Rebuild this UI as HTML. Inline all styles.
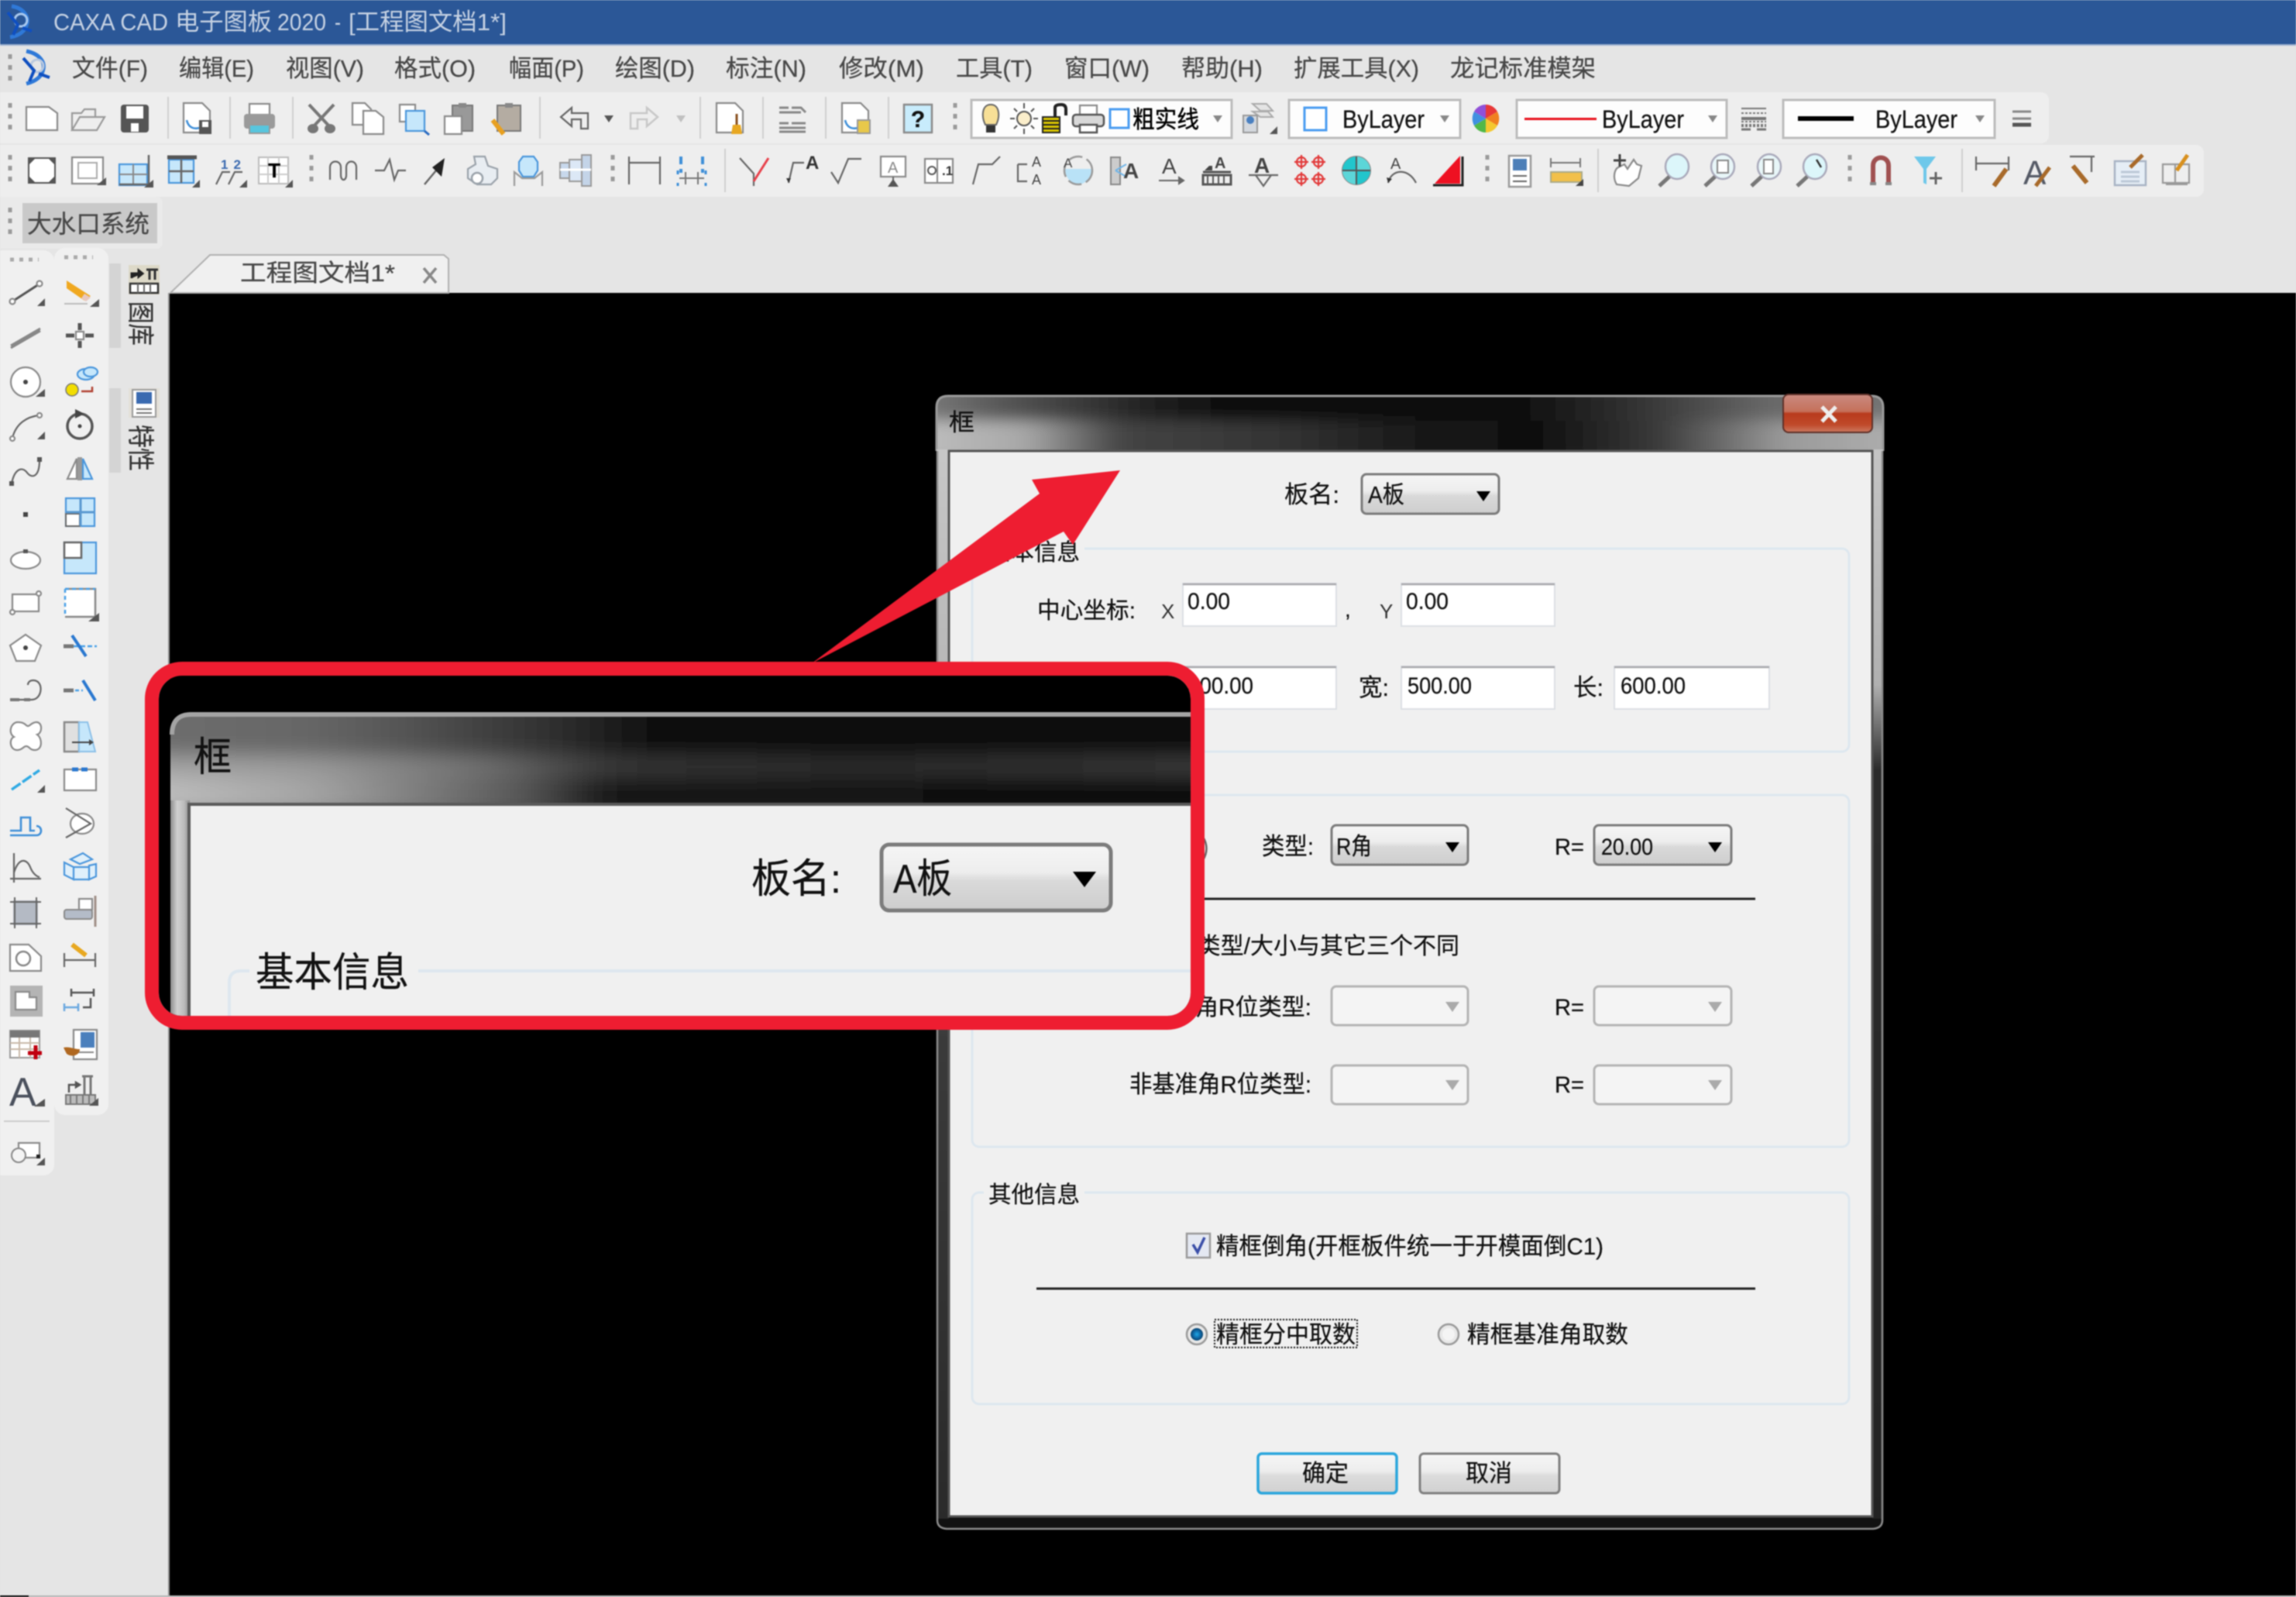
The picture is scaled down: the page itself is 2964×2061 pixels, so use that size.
<!DOCTYPE html>
<html lang="zh"><head><meta charset="utf-8"><title>CAXA CAD</title>
<style>
html,body{margin:0;padding:0;background:#e5e5e5;width:2964px;height:2061px;overflow:hidden}
svg{display:block;filter:blur(.9px)}
text{font-family:"Liberation Sans","Noto Sans CJK SC",sans-serif;fill:#111;stroke:#111;stroke-width:.25}
.m text,text.m{fill:#474747;stroke:#474747}
.s{fill:none;stroke:#666;stroke-width:2.2}
.l{fill:none;stroke:#999;stroke-width:2.2}
.w{fill:#fff;stroke:#8a8a8a;stroke-width:2.2}
.p{fill:#e8edf2;stroke:#9aa2aa;stroke-width:2.2}
.b{fill:#c6e7fb;stroke:#4a96dc;stroke-width:2.2}
.bl{fill:none;stroke:#3f8fd8;stroke-width:2.6}
.r{fill:none;stroke:#e23a3a;stroke-width:2.2}
.k{fill:#555}
.t{fill:#555}
.sep{stroke:#cfcfcf;stroke-width:2}
.grip{stroke:#9a9a9a;stroke-width:5;stroke-dasharray:6 8;fill:none}
</style></head><body>
<svg xmlns="http://www.w3.org/2000/svg" width="2964" height="2061" viewBox="0 0 2964 2061">
<defs>
<linearGradient id="cb" x1="0" y1="0" x2="0" y2="1"><stop offset="0" stop-color="#f5f5f5"/><stop offset=".42" stop-color="#ededed"/><stop offset=".55" stop-color="#d9d9d9"/><stop offset="1" stop-color="#cdcdcd"/></linearGradient>
<linearGradient id="btn" x1="0" y1="0" x2="0" y2="1"><stop offset="0" stop-color="#f6f6f6"/><stop offset=".45" stop-color="#ececec"/><stop offset=".55" stop-color="#dcdcdc"/><stop offset="1" stop-color="#d0d0d0"/></linearGradient>
<linearGradient id="close" x1="0" y1="0" x2="0" y2="1"><stop offset="0" stop-color="#c98a80"/><stop offset=".45" stop-color="#c5705a"/><stop offset=".5" stop-color="#b83a1c"/><stop offset=".8" stop-color="#c04a2a"/><stop offset="1" stop-color="#cc7a62"/></linearGradient>
<linearGradient id="side" x1="0" y1="0" x2="1" y2="0"><stop offset="0" stop-color="#8c8c8c"/><stop offset=".35" stop-color="#d0d0d0"/><stop offset=".7" stop-color="#bcbcbc"/><stop offset="1" stop-color="#8a8a8a"/></linearGradient>
<linearGradient id="t1" x1="0" y1="0" x2="1" y2="0"><stop offset="0" stop-color="#8a8a8a"/><stop offset=".1" stop-color="#5a5a5a"/><stop offset=".25" stop-color="#202020"/><stop offset=".33" stop-color="#0c0c0c"/><stop offset=".6" stop-color="#0c0c0c"/><stop offset=".72" stop-color="#333"/><stop offset=".85" stop-color="#6a6a6a"/><stop offset="1" stop-color="#777"/></linearGradient>
<linearGradient id="t2" x1="0" y1="0" x2="1" y2="0"><stop offset="0" stop-color="#c4c4c4"/><stop offset=".13" stop-color="#a8a8a8"/><stop offset=".22" stop-color="#444"/><stop offset=".38" stop-color="#333"/><stop offset=".5" stop-color="#1a1a1a"/><stop offset=".62" stop-color="#0e0e0e"/><stop offset=".74" stop-color="#3a3a3a"/><stop offset=".86" stop-color="#9a9a9a"/><stop offset="1" stop-color="#b4b4b4"/></linearGradient>
<linearGradient id="c1" x1="0" y1="0" x2="1" y2="0"><stop offset="0" stop-color="#707070"/><stop offset=".18" stop-color="#666"/><stop offset=".26" stop-color="#555"/><stop offset=".41" stop-color="#2a2a2a"/><stop offset=".48" stop-color="#0e0e0e"/><stop offset="1" stop-color="#0e0e0e"/></linearGradient>
<linearGradient id="c2" x1="0" y1="0" x2="1" y2="0"><stop offset="0" stop-color="#a4a4a4"/><stop offset=".18" stop-color="#989898"/><stop offset=".33" stop-color="#707070"/><stop offset=".44" stop-color="#383838"/><stop offset=".66" stop-color="#2a2a2a"/><stop offset="1" stop-color="#3a3a3a"/></linearGradient>
<linearGradient id="c3" x1="0" y1="0" x2="1" y2="0"><stop offset="0" stop-color="#c4c4c4"/><stop offset=".18" stop-color="#a4a4a4"/><stop offset=".37" stop-color="#555"/><stop offset=".44" stop-color="#151515"/><stop offset="1" stop-color="#0e0e0e"/></linearGradient>
<linearGradient id="fl" x1="0" y1="0" x2="0" y2="1"><stop offset="0" stop-color="#c6c6c6"/><stop offset=".2" stop-color="#b8b8b8"/><stop offset=".55" stop-color="#3a3a3a"/><stop offset="1" stop-color="#2a2a2a"/></linearGradient>
<linearGradient id="fr" x1="0" y1="0" x2="0" y2="1"><stop offset="0" stop-color="#c4c4c4"/><stop offset=".22" stop-color="#b0b0b0"/><stop offset=".3" stop-color="#2a2a2a"/><stop offset="1" stop-color="#222"/></linearGradient>
<filter id="bz" x="-5%" y="-50%" width="110%" height="200%"><feGaussianBlur stdDeviation="18 9"/></filter>
<filter id="bz2" x="-5%" y="-50%" width="110%" height="200%"><feGaussianBlur stdDeviation="28 12"/></filter>
<clipPath id="dt"><path d="M1209,582V526Q1209,511 1224,511H2416Q2431,511 2431,526V582Z"/></clipPath>
<clipPath id="ct"><path d="M220,1040V948Q220,922 246,922H1540V1040Z"/></clipPath>
<clipPath id="ci"><rect x="205" y="872" width="1332" height="439" rx="30"/></clipPath>
<radialGradient id="rd" cx=".5" cy=".5" r=".5"><stop offset="0" stop-color="#1fa8e6"/><stop offset=".55" stop-color="#0f6cab"/><stop offset="1" stop-color="#0a4470"/></radialGradient>
</defs>

<rect width="2964" height="2061" fill="#e5e5e5"/>
<!-- title -->
<rect width="2964" height="57" fill="#2b5797"/>
<rect y="57" width="2964" height="2" fill="#9fb2cf"/>
<g transform="translate(25,28)"><path d="M-10,-20C4,-18 12,-8 10,2C8,12 0,18 -12,20" fill="none" stroke="#2f79d8" stroke-width="5"/><circle cx="2" cy="-2" r="8" fill="none" stroke="#a9c8ee" stroke-width="3"/><path d="M-15,-12L-2,4L-8,17M16,12L4,8" fill="none" stroke="#0f4fc0" stroke-width="4"/></g>
<g font-size="31" style="fill:#c6d2e3">
<text x="69" y="39" textLength="148" lengthAdjust="spacingAndGlyphs" style="fill:#c6d2e3;stroke:none">CAXA CAD</text>
<text x="226" y="39" textLength="125" lengthAdjust="spacingAndGlyphs" style="fill:#c6d2e3;stroke:none">电子图板</text>
<text x="358" y="39" textLength="63" lengthAdjust="spacingAndGlyphs" style="fill:#c6d2e3;stroke:none">2020</text>
<text x="432" y="39" textLength="8" lengthAdjust="spacingAndGlyphs" style="fill:#c6d2e3;stroke:none">-</text>
<text x="450" y="39" textLength="204" lengthAdjust="spacingAndGlyphs" style="fill:#c6d2e3;stroke:none">[工程图文档1*]</text>
</g>

<!-- menu -->
<path class="grip" d="M13,70V106"/>
<g transform="translate(46,87)"><path d="M-12,-21C4,-18 12,-8 10,2C8,12 0,18 -12,21" fill="none" stroke="#2f79d8" stroke-width="5"/><circle cx="2" cy="-2" r="8" fill="none" stroke="#b9c8de" stroke-width="3"/><path d="M-16,-12L-2,4L-8,18M18,13L4,8" fill="none" stroke="#0f4fc0" stroke-width="4"/></g>
<g class="m" font-size="31">
<text x="93" y="99" textLength="98" lengthAdjust="spacingAndGlyphs">文件(F)</text>
<text x="231" y="99" textLength="97" lengthAdjust="spacingAndGlyphs">编辑(E)</text>
<text x="369" y="99" textLength="101" lengthAdjust="spacingAndGlyphs">视图(V)</text>
<text x="509" y="99" textLength="105" lengthAdjust="spacingAndGlyphs">格式(O)</text>
<text x="657" y="99" textLength="97" lengthAdjust="spacingAndGlyphs">幅面(P)</text>
<text x="794" y="99" textLength="103" lengthAdjust="spacingAndGlyphs">绘图(D)</text>
<text x="937" y="99" textLength="104" lengthAdjust="spacingAndGlyphs">标注(N)</text>
<text x="1083" y="99" textLength="110" lengthAdjust="spacingAndGlyphs">修改(M)</text>
<text x="1234" y="99" textLength="99" lengthAdjust="spacingAndGlyphs">工具(T)</text>
<text x="1374" y="99" textLength="110" lengthAdjust="spacingAndGlyphs">窗口(W)</text>
<text x="1525" y="99" textLength="105" lengthAdjust="spacingAndGlyphs">帮助(H)</text>
<text x="1670" y="99" textLength="162" lengthAdjust="spacingAndGlyphs">扩展工具(X)</text>
<text x="1872" y="99" textLength="188" lengthAdjust="spacingAndGlyphs">龙记标准模架</text>
</g>

<!-- toolbars -->
<rect x="-10" y="119" width="2655" height="66" rx="10" fill="#eeeeee"/>
<rect x="-10" y="187" width="2855" height="67" rx="10" fill="#eeeeee"/>
<rect x="-10" y="254" width="220" height="67" rx="8" fill="#eaeaea"/>
<rect x="29" y="262" width="174" height="52" fill="#c9c9c9"/>
<text class="m" x="35" y="300" font-size="32" textLength="158" lengthAdjust="spacingAndGlyphs">大水口系统</text>
<path class="grip" d="M13,133V170M13,200V238M13,268V306M1233,133V170M402,200V238M791,200V238M1920,200V238M2388,200V238"/>
<path class="sep" d="M217,125V179M297,125V179M378,125V179M697,125V179M904,125V179M985,125V179M1066,125V179M1147,125V179M936,192V248M2063,192V248M2533,192V248"/>

<!-- row 1 -->
<g transform="translate(54,153)"><path class="w" d="M-20,-15H9L20,-7V15H-20Z"/></g>
<g transform="translate(113,153)"><path class="l" d="M-20,15V-7H-8L-4,-12H10V-2M-20,15L-10,-2H22L12,15Z"/></g>
<g transform="translate(174,153)"><rect x="-18" y="-18" width="36" height="36" rx="4" fill="#555"/><rect x="-11" y="-16" width="22" height="16" fill="#fff"/><rect x="-5" y="6" width="10" height="11" fill="#fff"/></g>
<g transform="translate(255,153)"><path class="w" d="M-18,-20H6L16,-10V18H-18Z"/><path class="bl" d="M-14,2C-12,12 -4,14 2,12"/><rect x="2" y="2" width="16" height="18" fill="#555"/><rect x="6" y="4" width="8" height="7" fill="#fff"/></g>
<g transform="translate(335,153)"><rect x="-13" y="-19" width="26" height="14" class="w"/><rect x="-20" y="-6" width="40" height="19" rx="4" fill="#9a9a9a"/><rect x="-13" y="8" width="26" height="11" fill="#58c6de" stroke="#999" stroke-width="2"/></g>
<g transform="translate(415,153)"><path d="M-16,-18L12,12M16,-18L-12,12" stroke="#777" stroke-width="4" fill="none"/><ellipse cx="-11" cy="13" rx="7" ry="6" fill="#777"/><ellipse cx="11" cy="13" rx="7" ry="6" fill="#777"/></g>
<g transform="translate(475,153)"><path class="w" d="M-20,-20H-4L4,-12V8H-20Z"/><path class="w" d="M-6,-10H10L20,-2V20H-6Z"/></g>
<g transform="translate(534,153)"><rect x="-18" y="-18" width="20" height="22" class="w"/><rect x="-10" y="-10" width="24" height="26" class="b"/><path d="M14,16L20,21" stroke="#2a6ac0" stroke-width="3"/></g>
<g transform="translate(592,153)"><rect x="-8" y="-17" width="26" height="33" fill="#999" stroke="#777" stroke-width="2"/><rect x="0" y="-20" width="10" height="6" fill="#888"/><path class="w" d="M-18,-3H4V20H-18Z"/></g>
<g transform="translate(654,153)"><rect x="-12" y="-17" width="30" height="33" fill="#b4aca2" stroke="#777" stroke-width="2"/><rect x="-2" y="-20" width="10" height="6" fill="#888"/><path d="M-18,2L-4,20" stroke="#e8a020" stroke-width="6"/></g>
<g transform="translate(741,153)"><path class="s" d="M-17,-2L-3,-14V-7H18V13H9V1H-3V10Z"/></g>
<path class="t" d="M780,149H792L786,158Z"/>
<g transform="translate(832,153)"><path fill="none" stroke="#c8c8c8" stroke-width="2.5" d="M17,-2L3,-14V-7H-18V13H-9V1H3V10Z"/></g>
<path fill="#c0c0c0" d="M873,149H885L879,158Z"/>
<g transform="translate(943,153)"><path class="w" d="M-18,-20H6L16,-10V18H-18Z"/><path d="M8,-6V8" stroke="#8a5020" stroke-width="3"/><path d="M3,8H13L15,20H1Z" fill="#e8a822"/></g>
<g transform="translate(1024,153)" fill="none" stroke="#888" stroke-width="3"><path d="M-18,-14H-6M-2,-14H10L16,-8M-18,-8H10M-18,6H-6M-2,6H16M-18,12H16M-18,17H16"/></g>
<g transform="translate(1105,153)"><path class="w" d="M-18,-20H6L16,-10V18H-18Z"/><path class="bl" d="M-14,2C-12,12 -4,14 2,12"/><rect x="2" y="2" width="16" height="17" fill="#e8c84a" stroke="#999" stroke-width="2"/></g>
<g transform="translate(1185,153)"><rect x="-18" y="-18" width="36" height="36" fill="#c8ecfc" stroke="#8a8a8a" stroke-width="2.5"/><text x="0" y="11" text-anchor="middle" font-size="30" font-weight="bold">?</text></g>

<rect x="1254" y="129" width="336" height="49" fill="#fdfdfd" stroke="#bcbcbc" stroke-width="3"/>
<g transform="translate(1279,153)"><path d="M-7,8C-12,-2 -12,-18 0,-18C12,-18 12,-2 7,8Z" fill="#f7df96" stroke="#666" stroke-width="2"/><path d="M-6,9H6V18H-6Z" fill="#333"/></g>
<g transform="translate(1322,153)"><circle r="9" fill="#fbeecb" stroke="#555" stroke-width="2"/><path d="M0,-20V-13M0,13V20M-18,0H-12M12,0H18M-13,-13L-9,-9M9,9L13,13M-13,13L-9,9M9,-9L13,-13" stroke="#555" stroke-width="2"/></g>
<g transform="translate(1362,153)"><rect x="-16" y="-2" width="22" height="20" fill="#dcc800" stroke="#222" stroke-width="2"/><path d="M-16,3H6M-16,8H6M-16,13H6" stroke="#222" stroke-width="2"/><path d="M0,-2V-14Q0,-18 8,-18Q14,-18 14,-12V-4" fill="none" stroke="#222" stroke-width="4"/></g>
<g transform="translate(1405,153)"><rect x="-11" y="-17" width="22" height="12" class="w"/><rect x="-20" y="-5" width="40" height="15" rx="4" fill="#d8d8d8" stroke="#555" stroke-width="2.5"/><rect x="-11" y="8" width="22" height="10" fill="#fff" stroke="#555" stroke-width="2.5"/></g>
<rect x="1433" y="141" width="24" height="24" fill="#fff" stroke="#4a9cf0" stroke-width="3"/>
<text x="1462" y="165" font-size="31" textLength="86" lengthAdjust="spacingAndGlyphs" style="fill:#000;stroke:#000;stroke-width:.5">粗实线</text>
<path fill="#888" d="M1566,149H1578L1572,158Z"/>
<g transform="translate(1625,153)"><path d="M-8,-19H10L18,-10H2Z M-8,-9H12L18,-2H2Z" fill="#e4e4e4" stroke="#aaa" stroke-width="2"/><rect x="-20" y="-4" width="18" height="22" fill="#d4d8de" stroke="#999" stroke-width="2"/><circle cx="-11" cy="2" r="5" fill="#4a80c0"/><path d="M14,20H24V10Z" fill="#555"/></g>

<rect x="1664" y="129" width="221" height="49" fill="#fdfdfd" stroke="#bcbcbc" stroke-width="3"/>
<rect x="1684" y="139" width="28" height="29" fill="#fff" stroke="#4a9cf0" stroke-width="3"/>
<text x="1733" y="165" font-size="32" textLength="106" lengthAdjust="spacingAndGlyphs">ByLayer</text>
<path fill="#888" d="M1859,149H1871L1865,158Z"/>
<g transform="translate(1918,153)"><path d="M0,0L0,-18A17,18 0 0 1 15,-9Z" fill="#e83838"/><path d="M0,0L15,-9A17,18 0 0 1 15,9Z" fill="#f08020"/><path d="M0,0L15,9A17,18 0 0 1 0,18Z" fill="#f4c830"/><path d="M0,0L0,18A17,18 0 0 1 -15,9Z" fill="#50b848"/><path d="M0,0L-15,9A17,18 0 0 1 -15,-9Z" fill="#4090e0"/><path d="M0,0L-15,-9A17,18 0 0 1 0,-18Z" fill="#9050d8"/></g>
<rect x="1958" y="129" width="271" height="49" fill="#fdfdfd" stroke="#bcbcbc" stroke-width="3"/>
<rect x="1968" y="152" width="93" height="3" fill="#e8101c"/>
<text x="2068" y="165" font-size="32" textLength="106" lengthAdjust="spacingAndGlyphs">ByLayer</text>
<path fill="#888" d="M2205,149H2217L2211,158Z"/>
<g transform="translate(2264,153)" stroke="#777" stroke-width="3" fill="none"><path d="M-16,-13H16" stroke-width="2"/><path d="M-16,-7H16M-16,4H16" stroke-dasharray="3 2" stroke-width="2"/><path d="M-16,0H16" stroke-width="4"/><path d="M-16,9H16" stroke-width="4" stroke-dasharray="3 2"/><path d="M-16,14H-4M4,14H16"/></g>
<rect x="2302" y="129" width="273" height="49" fill="#fdfdfd" stroke="#bcbcbc" stroke-width="3"/>
<rect x="2321" y="150" width="72" height="6" fill="#000"/>
<text x="2421" y="165" font-size="32" textLength="106" lengthAdjust="spacingAndGlyphs">ByLayer</text>
<path fill="#888" d="M2550,149H2562L2556,158Z"/>
<path d="M2598,144H2622M2598,153H2622" stroke="#888" stroke-width="3"/><path d="M2598,161H2622" stroke="#555" stroke-width="5"/>

<!-- row 2 -->
<g transform="translate(54,220)"><rect x="-18" y="-17" width="36" height="34" fill="#555"/><path d="M-9,-15H9L16,-8V8L9,15H-9L-16,8V-8Z" fill="#fff"/></g>
<g transform="translate(113,220)"><rect x="-20" y="-17" width="40" height="34" class="w"/><rect x="-12" y="-10" width="24" height="20" fill="#fff" stroke="#aaa" stroke-width="2"/><path d="M12,19H24V9Z" fill="#555"/></g>
<g transform="translate(174,220)"><rect x="-20" y="-8" width="36" height="27" class="b"/><path d="M-20,5H16M-2,-8V19" stroke="#888" stroke-width="2"/><path d="M18,-20V18H-20" stroke="#666" stroke-width="2.5" fill="none"/><path d="M12,22H24V12Z" fill="#555"/></g>
<g transform="translate(236,220)"><rect x="-18" y="-14" width="32" height="30" class="b"/><path d="M-20,-17H18" stroke="#555" stroke-width="5"/><path d="M-2,-14V16M-18,1H14" stroke="#666" stroke-width="2.5"/><path d="M12,22H22V12Z" fill="#555"/></g>
<g transform="translate(295,220)"><text x="-10" y="-2" font-size="17" font-weight="bold" style="fill:#3b6ab0;stroke:none" textLength="26" lengthAdjust="spacing">1 2</text><path d="M-16,18L-8,2H2M0,18L8,2H18" class="s"/><path d="M14,22H24V12Z" fill="#555"/></g>
<g transform="translate(354,220)"><rect x="-20" y="-17" width="38" height="34" fill="#fff" stroke="#bbb" stroke-width="2"/><path d="M-20,-6H18M-20,5H18M-8,-17V17M6,-17V17" stroke="#ccc" stroke-width="2"/><text x="0" y="9" text-anchor="middle" font-size="26" font-weight="bold" style="fill:#000">T</text><path d="M14,22H24V12Z" fill="#555"/></g>
<g transform="translate(443,220)"><path class="s" d="M-17,12V-4C-17,-14 -3,-14 -3,-4V6C-3,14 4,14 4,6V-4C4,-14 17,-14 17,-4V12"/></g>
<g transform="translate(504,220)"><path class="s" d="M-20,0H-8L-1,-14L5,12L10,0H20"/></g>
<g transform="translate(562,220)"><path d="M-14,18L6,-6" stroke="#666" stroke-width="2.5"/><path d="M12,-16L8,8L-4,-4Z" fill="#222"/></g>
<g transform="translate(624,220)"><path class="p" d="M-12,-18H2L6,-6L18,-2V10L10,18H-8L-20,10V-2L-10,-8Z"/><circle cx="-8" cy="10" r="7" fill="#fff" stroke="#9aa2aa" stroke-width="2.5"/></g>
<g transform="translate(682,220)"><path class="b" d="M-7,-18H7L12,-11V0L7,8H-7L-12,0V-11Z"/><path class="l" d="M-18,20V2L-8,10H8L18,2V20"/></g>
<g transform="translate(743,220)"><path d="M-20,-10H-6V10H-20Z" fill="#c8d8ec" stroke="#999" stroke-width="2"/><path d="M-8,-14H8V14H-8Z" fill="#dce8f6" stroke="#999" stroke-width="2"/><path d="M8,-20H20V20H8Z" fill="#c4d4e8" stroke="#999" stroke-width="2"/><path d="M-20,-1H20" stroke="#fff" stroke-width="3"/></g>
<g transform="translate(832,220)" class="s"><path d="M-20,-18V18M20,-18V18M-20,-10H20" fill="none"/></g>
<g transform="translate(893,220)" fill="none"><path d="M-14,-18V-8M14,-18V-8M-14,3V-2M14,3V-2" stroke="#3f8fd8" stroke-width="4"/><path d="M-16,10H16M-8,2V18M8,2V18" stroke="#777" stroke-width="2"/><path d="M-18,16V20M18,16V20M-18,0V5M18,0V5" stroke="#3f8fd8" stroke-width="3"/></g>
<g transform="translate(973,220)"><path class="s" d="M-18,-16L0,4V20"/><path d="M19,-16L0,14" stroke="#e8404a" stroke-width="3"/></g>
<g transform="translate(1032,220)"><path class="s" d="M-14,16L-8,-10H6"/><path d="M-14,16l-3,-6h6z" fill="#333"/><text x="8" y="-2" font-size="24" font-weight="bold" style="fill:#333;stroke:none">A</text></g>
<g transform="translate(1092,220)"><path class="s" d="M-19,2L-10,16L3,-15H20"/></g>
<g transform="translate(1153,220)"><rect x="-16" y="-18" width="32" height="26" class="w"/><text x="-7" y="3" font-size="20" style="fill:#888;stroke:none">A</text><path d="M0,8V14" stroke="#666" stroke-width="2"/><path d="M-7,21L0,11L7,21Z" fill="#555"/></g>
<g transform="translate(1212,220)"><rect x="-18" y="-15" width="36" height="31" class="w"/><path d="M-2,-15V16" stroke="#888" stroke-width="2"/><circle cx="-9" r="5" fill="none" stroke="#555" stroke-width="2"/><text x="4" y="6" font-size="17" font-weight="bold" style="fill:#333;stroke:none">.1</text></g>
<g transform="translate(1273,220)"><path class="s" d="M-17,18L-10,-8H8L18,-18"/></g>
<g transform="translate(1332,220)"><path class="s" d="M-18,-8H-6M-18,-8V14H-6"/><text x="0" y="-5" font-size="18" style="fill:#444;stroke:none">A</text><text x="0" y="18" font-size="18" style="fill:#444;stroke:none">A</text></g>
<g transform="translate(1392,220)"><path d="M-17,-2H17A17,20 0 0 1 -17,-2Z" fill="#b9e2f7"/><circle r="18" cy="0" fill="none" stroke="#999" stroke-width="2.5" stroke-dasharray="18 6"/><text x="-19" y="-4" font-size="17" style="fill:#444;stroke:none">A</text></g>
<g transform="translate(1452,220)"><rect x="-18" y="-17" width="12" height="35" fill="#ccc" stroke="#888" stroke-width="2"/><path d="M-12,0L2,-8M-12,0L2,8" stroke="#6fb4e8" stroke-width="2"/><text x="-2" y="10" font-size="28" font-weight="bold" style="fill:#444;stroke:none">A</text></g>
<g transform="translate(1512,220)"><text x="-12" y="4" font-size="28" style="fill:#444;stroke:none">A</text><path d="M-16,13H16M16,13l-6,-4v8z" stroke="#666" stroke-width="2" fill="#666"/></g>
<g transform="translate(1571,220)"><text x="-3" y="-3" font-size="20" font-weight="bold" style="fill:#444;stroke:none">A</text><path d="M-16,0l6,-6h4v6Z" fill="#444"/><rect x="-18" y="6" width="36" height="12" fill="none" stroke="#555" stroke-width="3"/><path d="M-12,6V18M-5,6V18M2,6V18M9,6V18" stroke="#555" stroke-width="2"/><path d="M-18,2H18" stroke="#555" stroke-width="3"/></g>
<g transform="translate(1631,220)"><text x="-12" y="3" font-size="28" font-weight="bold" style="fill:#444;stroke:none">A</text><path d="M-19,6H19M-10,6L0,20L10,6" class="s"/></g>
<g transform="translate(1691,220)" class="r"><circle cx="-11" cy="-11" r="6"/><circle cx="11" cy="-11" r="6"/><circle cx="-11" cy="11" r="6"/><circle cx="11" cy="11" r="6"/><path d="M-11,-20V-2M-20,-11H-2M11,-20V-2M2,-11H20M-11,2V20M-20,11H-2M11,2V20M2,11H20"/></g>
<g transform="translate(1751,220)"><ellipse rx="18" ry="18" fill="#fff" stroke="#888" stroke-width="2"/><path d="M0,0V-18A18,18 0 0 0 -18,0Z M0,0V18A18,18 0 0 0 18,0Z" fill="#22c6cc"/><path d="M0,0V-18A18,18 0 0 1 18,0Z M0,0V18A18,18 0 0 1 -18,0Z" fill="#5cd6d8"/><path d="M0,-18V18M-18,0H18" stroke="#555" stroke-width="2"/></g>
<g transform="translate(1810,220)"><text x="-15" y="-2" font-size="20" style="fill:#444;stroke:none">A</text><path class="s" d="M-18,16C-14,-2 8,-4 18,16"/><path d="M-18,16l-2,-7l7,2z" fill="#333"/></g>
<g transform="translate(1870,220)"><path d="M-18,17L15,-19V17Z" fill="#ee1122"/><path d="M-20,19H18V-18" fill="none" stroke="#222" stroke-width="3"/></g>
<g transform="translate(1962,220)"><rect x="-14" y="-19" width="28" height="40" fill="#fff" stroke="#999" stroke-width="2.5"/><rect x="-9" y="-15" width="18" height="15" fill="#4d7fb8"/><path d="M-9,7H9M-9,14H9" stroke="#666" stroke-width="2"/></g>
<g transform="translate(2022,220)"><path d="M-20,-10H18M-20,-16V-4M18,-16V-4" stroke="#777" stroke-width="2"/><rect x="-20" y="2" width="40" height="13" fill="#f2c04a" stroke="#aa8" stroke-width="2"/><path d="M12,20H22V11Z" fill="#444"/></g>
<g transform="translate(2101,220)"><path class="w" d="M-14,18C-20,8 -16,-2 -12,-4L-4,-8L0,-2L8,-14L12,-8L18,-6L14,10L2,20Z"/><path d="M-10,-21V-5M-18,-13H-2" stroke="#444" stroke-width="3"/></g>
<g transform="translate(2161,220)"><ellipse cx="4" cy="-5" rx="15" ry="16" fill="#dcf6fa" stroke="#aab" stroke-width="2.5"/><path d="M-6,8L-19,20" stroke="#777" stroke-width="5"/></g>
<g transform="translate(2220,220)"><ellipse cx="4" cy="-5" rx="15" ry="16" fill="#e8f6f8" stroke="#aab" stroke-width="2.5"/><rect x="-3" y="-13" width="14" height="16" fill="#fff" stroke="#888" stroke-width="2"/><path d="M-6,8L-19,20" stroke="#777" stroke-width="5"/></g>
<g transform="translate(2280,220)"><ellipse cx="4" cy="-5" rx="15" ry="16" fill="#e8f6f8" stroke="#aab" stroke-width="2.5"/><rect x="-3" y="-14" width="12" height="18" fill="#fff" stroke="#888" stroke-width="2"/><path d="M-6,8L-19,20" stroke="#777" stroke-width="5"/></g>
<g transform="translate(2339,220)"><ellipse cx="4" cy="-5" rx="15" ry="16" fill="#dcf6fa" stroke="#aab" stroke-width="2.5"/><path d="M6,-14L12,-4" stroke="#333" stroke-width="2.5"/><path d="M-6,8L-19,20" stroke="#777" stroke-width="5"/></g>
<g transform="translate(2428,220)"><path d="M-10,16V-6C-10,-20 10,-20 10,-6V16" fill="none" stroke="#a05050" stroke-width="6"/><path d="M-14,17H-6M6,17H14" stroke="#888" stroke-width="4"/></g>
<g transform="translate(2489,220)"><path d="M-18,-18H10L-2,-2V18L-6,16V-2Z" fill="#6ec8ea"/><path d="M10,2V18M2,10H18" stroke="#666" stroke-width="3"/></g>
<g transform="translate(2572,220)"><path class="s" d="M-21,-18V0M21,-18V0M-21,-9H21"/><path d="M2,20L18,-2" stroke="#a86a2a" stroke-width="6"/></g>
<g transform="translate(2630,220)"><text x="-18" y="18" font-size="44" style="fill:#555a66;stroke:none">A</text><path d="M-2,20L16,-4" stroke="#a86a2a" stroke-width="5"/></g>
<g transform="translate(2688,220)"><path class="s" d="M-16,-18H16M12,-18V2"/><path d="M-12,-6L6,16" stroke="#a86a2a" stroke-width="6"/></g>
<g transform="translate(2750,220)"><rect x="-20" y="-12" width="40" height="31" fill="#e6eef6" stroke="#a8b4c4" stroke-width="2.5"/><path d="M-12,2H12M-12,8H12M-12,14H12" stroke="#bcc8d8" stroke-width="3"/><path d="M0,-4L16,-20" stroke="#a86a2a" stroke-width="5"/></g>
<g transform="translate(2810,220)"><path class="l" d="M-18,-8H-2V16H-18ZM-2,-8H16V16H-2Z"/><path d="M-14,18H14" stroke="#999" stroke-width="2"/><path d="M0,0L14,-20" stroke="#d8901e" stroke-width="5"/></g>

<!-- left panels -->
<rect x="-10" y="323" width="80" height="1194" rx="14" fill="#f0f0f0"/>
<rect x="70" y="320" width="70" height="1119" rx="14" fill="#f0f0f0"/>
<path d="M13,335H50M83,332H120" fill="none" stroke="#aaa" stroke-width="5" stroke-dasharray="5 7"/>
<rect x="141" y="340" width="15" height="109" fill="#d4d4d4"/>
<rect x="141" y="501" width="15" height="109" fill="#d4d4d4"/>
<path d="M5,1447H64" stroke="#ccc" stroke-width="2"/>

<!-- col 1 -->
<g transform="translate(33,378)"><path d="M-17,11L17,-11" stroke="#555" stroke-width="3"/><circle cx="-17" cy="11" r="3.5" class="w"/><circle cx="18" cy="-12" r="3.5" class="w"/><path d="M15,17H25V7Z" fill="#555"/></g>
<g transform="translate(33,435)"><path d="M-19,11L19,-11M-19,14L19,-8" stroke="#888" stroke-width="3"/></g>
<g transform="translate(33,493)"><circle r="19" cy="0" class="w"/><circle r="3" fill="#444"/><path d="M13,19H25V9Z" fill="#555"/></g>
<g transform="translate(33,550)"><path class="s" d="M-17,15C-12,-4 2,-12 17,-14"/><circle cx="-17" cy="16" r="3" class="w"/><circle cx="18" cy="-14" r="3" class="w"/><path d="M15,17H25V7Z" fill="#555"/></g>
<g transform="translate(33,608)"><path class="s" d="M-18,16C-14,-4 -4,-6 2,2C8,10 18,8 18,-14"/><rect x="-21" y="13" width="6" height="6" fill="#555"/><rect x="15" y="-18" width="6" height="6" fill="#555"/></g>
<rect x="30" y="661" width="6" height="6" fill="#444"/>
<g transform="translate(33,723)"><ellipse rx="19" ry="11" class="w"/><rect x="-3" y="-14" width="6" height="5" fill="#555"/></g>
<g transform="translate(33,778)"><rect x="-17" y="-11" width="34" height="22" class="w"/><circle cx="-17" cy="12" r="3" class="w"/><circle cx="17" cy="-12" r="3" class="w"/></g>
<g transform="translate(33,836)"><path class="w" d="M0,-17L20,-3L12,17H-12L-20,-3Z"/><circle r="3" fill="#444"/></g>
<g transform="translate(33,890)"><path class="s" d="M-20,13H8C22,13 24,-12 10,-12C5,-12 3,-9 3,-6"/><path d="M-20,13H-8M-2,13H6" stroke="#777" stroke-width="4"/></g>
<g transform="translate(33,951)"><path class="w" d="M-10,-19C0,-19 0,-14 3,-14C6,-14 8,-19 14,-19C22,-19 22,-5 15,-3C22,2 22,17 12,17C5,17 5,12 1,12C-3,12 -4,17 -11,17C-20,17 -22,3 -15,0C-23,-5 -19,-19 -10,-19Z"/></g>
<g transform="translate(33,1006)"><path d="M-18,13L18,-12" stroke="#30aae4" stroke-width="3.5" stroke-dasharray="14 3"/><path d="M15,17H25V7Z" fill="#555"/></g>
<g transform="translate(33,1063)"><path class="bl" d="M-20,9H-6V-8H6V9H12M-20,15H14C22,15 22,3 14,3"/></g>
<g transform="translate(33,1121)"><path class="s" d="M-15,-20V18M-20,13H20"/><path class="s" d="M-15,5C-8,-16 2,-12 6,-2C9,6 14,10 18,11"/></g>
<g transform="translate(33,1178)"><rect x="-16" y="-16" width="32" height="32" fill="#b4bac4"/><path d="M-20,-14H20M-20,14H20M-14,-20V20M14,-20V20" stroke="#666" stroke-width="2"/></g>
<g transform="translate(33,1236)"><path class="w" d="M-20,-17H4L20,-2V17H-20Z"/><ellipse cx="-3" cy="1" rx="9" ry="9" fill="none" stroke="#888" stroke-width="2.5"/></g>
<g transform="translate(33,1292)"><rect x="-20" y="-20" width="42" height="40" fill="#b4b4b4"/><path class="w" d="M-13,-12H5V-5H14V11H-13Z"/></g>
<g transform="translate(33,1348)"><rect x="-20" y="-18" width="38" height="35" fill="#fff" stroke="#999" stroke-width="2"/><rect x="-20" y="-18" width="38" height="9" fill="#777"/><path d="M-20,-2H18M-20,6H18M-8,-9V17M6,-9V17" stroke="#c8b8a8" stroke-width="2"/><path d="M13,1V19M3,11H21" stroke="#c00010" stroke-width="5"/></g>
<text x="12" y="1427" font-size="52" style="fill:#4a505c;stroke:none">A</text><path d="M44,1428H58V1418Z" fill="#555"/>
<g transform="translate(33,1487)"><rect x="-9" y="-12" width="27" height="19" class="w"/><circle cx="-9" cy="4" r="9" fill="#f4f4f4" stroke="#888" stroke-width="2"/><rect x="14" y="3" width="5" height="5" fill="#222"/><path d="M14,17H25V7Z" fill="#555"/></g>

<!-- col 2 -->
<g transform="translate(103,378)"><path d="M-17,-16L14,4L6,10L-17,-6Z" fill="#f0a820"/><path d="M6,1L14,6L8,11L2,7Z" fill="#e8c8c0"/><path d="M-20,14H10" stroke="#bbb" stroke-width="2"/><path d="M13,18H25V8Z" fill="#555"/></g>
<g transform="translate(103,433)"><rect x="-5" y="-5" width="10" height="10" class="w"/><path d="M-18,0H-7M7,0H18M0,-16V-7M0,7V16" stroke="#555" stroke-width="5"/></g>
<g transform="translate(103,493)"><circle cx="-10" cy="10" r="8" fill="#f2dd00" stroke="#777" stroke-width="1.5"/><ellipse cx="8" cy="-10" rx="11" ry="7" class="b" stroke-width="2"/><ellipse cx="14" cy="-13" rx="9" ry="6" class="b" stroke-width="2"/><path d="M2,12H16V6" fill="none" stroke="#b04030" stroke-width="2.5"/></g>
<g transform="translate(103,550)"><circle r="16" fill="none" stroke="#555" stroke-width="3.5"/><circle r="2.5" fill="#444"/><path d="M-6,-22L6,-16L-6,-10Z" fill="#444"/></g>
<g transform="translate(103,605)"><path d="M-4,-13L-16,13H-4Z" class="w"/><path d="M4,-13L16,13H4Z" class="b"/><rect x="-3" y="-15" width="6" height="30" fill="#999"/></g>
<g transform="translate(103,661)"><rect x="-18" y="-18" width="37" height="36" class="b"/><rect x="-18" y="2" width="18" height="16" fill="#fff" stroke="#666" stroke-width="2"/><path d="M1,-18V18M-18,0H19" stroke="#5a98d0" stroke-width="3"/></g>
<g transform="translate(103,720)"><rect x="-20" y="-20" width="41" height="40" class="b"/><rect x="-20" y="-20" width="22" height="20" fill="#fff" stroke="#666" stroke-width="2.5"/></g>
<g transform="translate(103,778)"><rect x="-19" y="-18" width="39" height="36" fill="#fff"/><path d="M-19,-18H20V18H-19" fill="none" stroke="#888" stroke-width="2.5"/><path d="M-19,-18V18M-19,-18H20" fill="none" stroke="#48a0e8" stroke-width="2.5" stroke-dasharray="5 4"/><path d="M11,24H25V13Z" fill="#555"/></g>
<g transform="translate(103,834)"><path d="M-21,0H-8" stroke="#777" stroke-width="5"/><path d="M-8,0H22" stroke="#48a0e8" stroke-width="2.5" stroke-dasharray="6 3"/><path d="M-10,-14L8,13" stroke="#2a78d0" stroke-width="4"/></g>
<g transform="translate(103,891)"><path d="M-21,0H-8" stroke="#777" stroke-width="5"/><path d="M-6,0H4" stroke="#48a0e8" stroke-width="2.5" stroke-dasharray="5 3"/><path d="M4,-13L20,13" stroke="#2a78d0" stroke-width="4"/></g>
<g transform="translate(103,951)"><path d="M-20,-19H-1V19H-20Z" fill="#e0e0e0" stroke="#888" stroke-width="2.5"/><path d="M-1,-19H10L20,19H-1Z" fill="#c6e7fb" stroke="#8cc0e8" stroke-width="2"/><path d="M-10,7H12" stroke="#444" stroke-width="2"/><path d="M12,3L18,7L12,11Z" fill="#444"/></g>
<g transform="translate(103,1006)"><rect x="-20" y="-13" width="41" height="27" class="w"/><path d="M-10,-13H-2M10,-13H2" stroke="#2a78d0" stroke-width="5"/></g>
<g transform="translate(103,1063)"><ellipse cx="3" cy="0" rx="15" ry="13" class="w"/><path class="s" d="M-18,-20L14,0L-18,18"/></g>
<g transform="translate(103,1121)"><path d="M-20,-8L-8,-2V14L-20,8Z M-8,-2H12V14H-8Z M12,-4L21,-6V10L12,14Z M-12,-12L4,-20L16,-12L0,-6Z" fill="#e0f0fb" stroke="#4a96dc" stroke-width="2.2"/></g>
<g transform="translate(103,1178)"><rect x="-20" y="-4" width="36" height="12" rx="3" fill="#b4bcc8" stroke="#888" stroke-width="2"/><rect x="-1" y="-18" width="17" height="14" class="w" stroke-width="2"/><path d="M20,-22V18" stroke="#a09088" stroke-width="3"/></g>
<g transform="translate(103,1236)"><path class="s" d="M-20,-6V12M20,-6V12M-20,3H20"/><path d="M-10,-17L8,-3" stroke="#e8a820" stroke-width="6"/></g>
<g transform="translate(103,1292)"><path d="M-11,-11H18M-11,-16V-6M18,-16V-6" stroke="#555" stroke-width="2.5" fill="none"/><path d="M-20,8H-2M-20,3V13M-2,3V13" stroke="#6aa8e0" stroke-width="2.5" fill="none"/><path d="M4,8H14V-4" stroke="#555" stroke-width="2.5" fill="none"/></g>
<g transform="translate(103,1348)"><rect x="-8" y="-19" width="30" height="38" class="w" stroke-width="2"/><rect x="1" y="-16" width="18" height="20" fill="#4a7fbc"/><path d="M-4,10H18" stroke="#888" stroke-width="2"/><path d="M-21,4C-14,2 -8,6 0,6C0,14 -10,17 -17,12Z" fill="#b06820"/></g>
<g transform="translate(103,1405)"><rect x="-18" y="8" width="38" height="12" fill="#bbb" stroke="#777" stroke-width="2"/><path d="M-12,8V20M-4,8V20M4,8V20M12,8V20" stroke="#777" stroke-width="2"/><path d="M-14,5V-5H-2M0,-5l-5,-3v6z" stroke="#555" stroke-width="2.5" fill="none"/><path d="M3,-16H17M6,-16V7M14,-16V7" stroke="#777" stroke-width="3" fill="none"/><path d="M12,22H24V12Z" fill="#555"/></g>

<!-- vertical tabs -->
<g transform="translate(186,361)"><rect x="-20" y="-19" width="40" height="38" fill="#ddd9c8"/><path d="M-16,-2V-8H-2M-2,-8l-5,-4v8z" stroke="#222" stroke-width="3" fill="#222"/><path d="M3,-13H18M7,-13V0M14,-13V0" stroke="#333" stroke-width="3" fill="none"/><rect x="-18" y="5" width="36" height="12" fill="#fff" stroke="#333" stroke-width="2.5"/><path d="M-8,5V17M0,5V17M8,5V17" stroke="#666" stroke-width="2"/></g>
<text transform="translate(169,389) rotate(90)" font-size="35" textLength="57" lengthAdjust="spacingAndGlyphs" style="fill:#333;stroke:#333">图库</text>
<g transform="translate(186,520)"><rect x="-20" y="-19" width="40" height="38" fill="#e3e0d8"/><rect x="-15" y="-17" width="30" height="35" fill="#fff" stroke="#999" stroke-width="2"/><rect x="-10" y="-14" width="20" height="15" fill="#3a6ab0"/><path d="M-10,8H10M-10,13H10" stroke="#777" stroke-width="2"/></g>
<text transform="translate(169,548) rotate(90)" font-size="35" textLength="60" lengthAdjust="spacingAndGlyphs" style="fill:#333;stroke:#333">特性</text>

<!-- canvas -->
<rect x="218" y="378" width="2746" height="1682" fill="#000"/>
<rect x="217" y="378" width="2" height="1682" fill="#8e8e8e"/>
<rect x="0" y="2059" width="2964" height="2" fill="#b4b4b4"/>
<rect x="0" y="2059" width="37" height="2" fill="#000"/>
<path d="M220,378L271,329H573L579,334V378Z" fill="#f0f0f0" stroke="#b0b0b0" stroke-width="2"/>
<text class="m" x="310" y="363" font-size="31" textLength="200" lengthAdjust="spacingAndGlyphs">工程图文档1*</text>
<path d="M547,346L563,365M563,346L547,365" stroke="#888" stroke-width="3.5"/>

<!-- main dialog -->
<rect x="1209" y="510" width="1222" height="1464" rx="14" fill="#111"/>
<g clip-path="url(#dt)">
<rect x="1209" y="510" width="1222" height="72" fill="#555"/>
<g filter="url(#bz)"><rect x="1150" y="495" width="1340" height="48" fill="url(#t1)"/><rect x="1150" y="543" width="1340" height="55" fill="url(#t2)"/></g>
</g>
<path d="M1209,582V526Q1209,511 1224,511H2416Q2431,511 2431,526V582" fill="none" stroke="#9a9a9a" stroke-width="3"/>
<rect x="1209" y="580" width="16" height="1380" fill="url(#fl)"/>
<rect x="2417" y="580" width="14" height="1380" fill="url(#fr)"/>
<path d="M1210,582V1962Q1210,1972 1222,1973H2418Q2430,1972 2430,1962V582" fill="none" stroke="#8c8c8c" stroke-width="2.5"/>
<rect x="1225" y="1958" width="1192" height="13" fill="#111"/>
<rect x="1225" y="582" width="1192" height="1375" fill="#f0f0f0" stroke="#555" stroke-width="3"/>
<rect x="2302" y="509" width="115" height="49" rx="7" fill="url(#close)" stroke="#5e3028" stroke-width="2"/>
<path d="M2352,525L2370,544M2370,525L2352,544" stroke="#eee" stroke-width="5"/>
<text x="1225" y="556" font-size="31" textLength="33" lengthAdjust="spacingAndGlyphs">框</text>

<text x="1658" y="649" font-size="31" textLength="71" lengthAdjust="spacingAndGlyphs">板名:</text>
<rect x="1758" y="612" width="177" height="51" rx="6" fill="url(#cb)" stroke="#7c7c7c" stroke-width="3"/>
<text x="1766" y="649" font-size="31" textLength="47" lengthAdjust="spacingAndGlyphs">A板</text>
<path d="M1906,634H1924L1915,647Z" fill="#000"/>

<g fill="none" stroke="#dde7ef" stroke-width="3">
<rect x="1255" y="708" width="1132" height="262" rx="9"/>
<rect x="1255" y="1026" width="1132" height="454" rx="9"/>
<rect x="1255" y="1539" width="1132" height="273" rx="9"/>
</g>
<rect x="1270" y="700" width="130" height="22" fill="#f0f0f0"/>
<rect x="1270" y="1531" width="130" height="22" fill="#f0f0f0"/>
<text x="1276" y="723" font-size="30" textLength="118" lengthAdjust="spacingAndGlyphs">基本信息</text>
<text x="1276" y="1552" font-size="30" textLength="118" lengthAdjust="spacingAndGlyphs">其他信息</text>

<text x="1339" y="798" font-size="30" textLength="127" lengthAdjust="spacingAndGlyphs">中心坐标:</text>
<text x="1499" y="798" font-size="26" style="fill:#333;stroke:none">X</text>
<g fill="#fff" stroke="#dcdfe4" stroke-width="2">
<rect x="1527" y="753" width="198" height="55"/><rect x="1809" y="753" width="198" height="55"/>
<rect x="1527" y="860" width="198" height="55"/><rect x="1809" y="860" width="198" height="55"/><rect x="2084" y="860" width="200" height="55"/>
</g>
<path d="M1527,754H1725M1809,754H2007M1527,861H1725M1809,861H2007M2084,861H2284" stroke="#a8a8ac" stroke-width="2.5"/>
<text x="1533" y="786" font-size="30" textLength="55" lengthAdjust="spacingAndGlyphs">0.00</text>
<text x="1815" y="786" font-size="30" textLength="55" lengthAdjust="spacingAndGlyphs">0.00</text>
<text x="1736" y="796" font-size="28">,</text>
<text x="1781" y="798" font-size="26" style="fill:#333;stroke:none">Y</text>
<text x="1533" y="895" font-size="30" textLength="85" lengthAdjust="spacingAndGlyphs">400.00</text>
<text x="1754" y="898" font-size="31" textLength="39" lengthAdjust="spacingAndGlyphs">宽:</text>
<text x="1817" y="895" font-size="30" textLength="83" lengthAdjust="spacingAndGlyphs">500.00</text>
<text x="2031" y="898" font-size="31" textLength="39" lengthAdjust="spacingAndGlyphs">长:</text>
<text x="2092" y="895" font-size="30" textLength="84" lengthAdjust="spacingAndGlyphs">600.00</text>

<text x="1629" y="1103" font-size="31" textLength="67" lengthAdjust="spacingAndGlyphs">类型:</text>
<rect x="1719" y="1065" width="176" height="51" rx="6" fill="url(#cb)" stroke="#7c7c7c" stroke-width="3"/>
<text x="1725" y="1103" font-size="31" textLength="46" lengthAdjust="spacingAndGlyphs">R角</text>
<path d="M1866,1087H1884L1875,1100Z" fill="#000"/>
<text x="2007" y="1103" font-size="30" textLength="38" lengthAdjust="spacingAndGlyphs">R=</text>
<rect x="2058" y="1065" width="177" height="51" rx="6" fill="url(#cb)" stroke="#7c7c7c" stroke-width="3"/>
<text x="2067" y="1103" font-size="30" textLength="67" lengthAdjust="spacingAndGlyphs">20.00</text>
<path d="M2205,1087H2223L2214,1100Z" fill="#000"/>
<path d="M1338,1160H2266M1338,1663H2266" stroke="#222" stroke-width="3"/>
<path d="M1553,1080Q1562,1095 1553,1110" fill="none" stroke="#666" stroke-width="2.5"/>
<text x="1884" y="1231" font-size="30" text-anchor="end">基准角R位类型/大小与其它三个不同</text>
<text x="1693" y="1310" font-size="30" text-anchor="end">基准角R位类型:</text>
<text x="1458" y="1410" font-size="31" textLength="235" lengthAdjust="spacingAndGlyphs">非基准角R位类型:</text>
<text x="2007" y="1310" font-size="30" textLength="38" lengthAdjust="spacingAndGlyphs">R=</text>
<text x="2007" y="1410" font-size="30" textLength="38" lengthAdjust="spacingAndGlyphs">R=</text>
<g fill="#f4f4f4" stroke="#b4b4b4" stroke-width="3">
<rect x="1719" y="1273" width="176" height="50" rx="6"/><rect x="2058" y="1273" width="177" height="50" rx="6"/>
<rect x="1719" y="1375" width="176" height="50" rx="6"/><rect x="2058" y="1375" width="177" height="50" rx="6"/>
</g>
<path d="M1866,1293H1884L1875,1306ZM2205,1293H2223L2214,1306ZM1866,1394H1884L1875,1407ZM2205,1394H2223L2214,1407Z" fill="#aaa"/>

<rect x="1532" y="1592" width="30" height="31" fill="#e4e8f2" stroke="#9a9a9a" stroke-width="2.5"/>
<path d="M1540,1606L1546,1616L1555,1597" fill="none" stroke="#3a4ea8" stroke-width="3.5"/>
<text x="1570" y="1619" font-size="31" textLength="500" lengthAdjust="spacingAndGlyphs">精框倒角(开框板件统一于开模面倒C1)</text>
<circle cx="1545" cy="1722" r="13" fill="#e8e8e8" stroke="#9a9a9a" stroke-width="2.5"/><circle cx="1545" cy="1722" r="8" fill="url(#rd)"/>
<rect x="1568" y="1703" width="184" height="36" fill="none" stroke="#111" stroke-width="2" stroke-dasharray="2 2"/>
<text x="1570" y="1733" font-size="31" textLength="180" lengthAdjust="spacingAndGlyphs">精框分中取数</text>
<circle cx="1870" cy="1722" r="13" fill="#e8e8e8" stroke="#9a9a9a" stroke-width="2.5"/><circle cx="1870" cy="1722" r="8" fill="#f4f4f4"/>
<text x="1894" y="1733" font-size="31" textLength="208" lengthAdjust="spacingAndGlyphs">精框基准角取数</text>

<rect x="1624" y="1876" width="179" height="51" rx="5" fill="url(#btn)" stroke="#2ba6dc" stroke-width="3.5"/>
<text x="1681" y="1912" font-size="31" textLength="60" lengthAdjust="spacingAndGlyphs">确定</text>
<rect x="1833" y="1876" width="180" height="51" rx="5" fill="url(#btn)" stroke="#808080" stroke-width="3"/>
<text x="1892" y="1912" font-size="31" textLength="60" lengthAdjust="spacingAndGlyphs">取消</text>

<!-- arrow -->
<path d="M1048,856L1342,637L1332,619L1446,607L1385,703L1373,686Z" fill="#ee1d31"/>

<!-- callout content -->
<g clip-path="url(#ci)">
<rect x="205" y="872" width="1332" height="439" fill="#000"/>
<g clip-path="url(#ct)">
<rect x="220" y="922" width="1320" height="118" fill="#333"/>
<g filter="url(#bz2)"><rect x="140" y="900" width="1460" height="75" fill="url(#c1)"/><rect x="140" y="975" width="1460" height="28" fill="url(#c2)"/><rect x="140" y="1003" width="1460" height="50" fill="url(#c3)"/></g>
</g>
<path d="M222,948Q222,922 247,922H1540" fill="none" stroke="#a4a4a4" stroke-width="6"/>
<rect x="220" y="1033" width="25" height="290" fill="url(#side)"/>
<rect x="244" y="1038" width="1300" height="290" fill="#f0f0f0" stroke="#5a5a5a" stroke-width="4"/>
<text x="250" y="995" font-size="52" textLength="49" lengthAdjust="spacingAndGlyphs">框</text>
<text x="970" y="1152" font-size="52" textLength="116" lengthAdjust="spacingAndGlyphs">板名:</text>
<rect x="1138" y="1090" width="296" height="85" rx="10" fill="url(#cb)" stroke="#7c7c7c" stroke-width="5"/>
<text x="1153" y="1152" font-size="52" textLength="76" lengthAdjust="spacingAndGlyphs">A板</text>
<path d="M1385,1125H1415L1400,1145Z" fill="#000"/>
<path d="M296,1330V1268Q296,1253 311,1253H1540" fill="none" stroke="#dde7ef" stroke-width="4"/>
<rect x="322" y="1240" width="218" height="30" fill="#f0f0f0"/>
<text x="330" y="1273" font-size="52" textLength="198" lengthAdjust="spacingAndGlyphs">基本信息</text>
</g>
<rect x="196" y="863" width="1350" height="457" rx="39" fill="none" stroke="#ee1d31" stroke-width="18"/>
</svg>
</body></html>
